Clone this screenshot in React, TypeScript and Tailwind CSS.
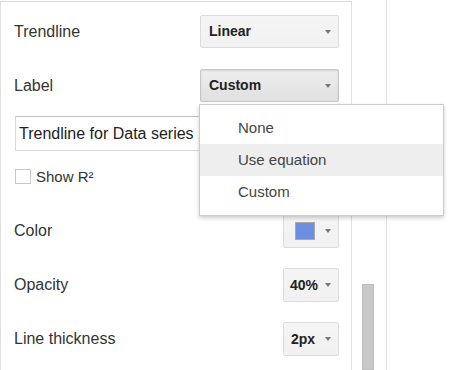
import React from "react";

function Arrow() {
  return <span className="h-0 w-0 border-x-[3px] border-t-[4px] border-x-transparent border-t-[#777]" />;
}

function Select({ value, width, pressed }: { value: string; width: string; pressed?: boolean }) {
  return (
    <div
      className={`flex h-full items-center justify-between rounded-[2px] border pr-[7px] text-[14px] font-bold text-[#222] ${width} ${
        pressed
          ? "border-[#c6c6c6] bg-gradient-to-b from-[#eeeeee] to-[#e0e0e0] shadow-[inset_0_1px_2px_rgba(0,0,0,0.1)]"
          : "border-[#dcdcdc] bg-gradient-to-b from-[#f5f5f5] to-[#f1f1f1]"
      }`}
    >
      <span>{value}</span>
      <Arrow />
    </div>
  );
}

function Row({ label, children, className }: { label: string; children: React.ReactNode; className: string }) {
  return (
    <div className={`flex items-center justify-between pl-[13px] pr-[12px] ${className}`}>
      <span className="text-[16px] text-[#333]">{label}</span>
      {children}
    </div>
  );
}

export default function App() {
  return (
    <div className="relative flex h-[370px] w-[450px] overflow-hidden bg-white font-['Liberation_Sans',Arial,sans-serif]">
      <div className="mt-px w-[352px] shrink-0 border-x border-t border-[#e0e0e0]">
        <Row label="Trendline" className="mt-[13px] h-[33px]">
          <Select value="Linear" width="w-[139px] pl-[8px]" />
        </Row>
        <Row label="Label" className="mt-[21px] h-[33px]">
          <Select value="Custom" width="w-[139px] pl-[8px]" pressed />
        </Row>
        <div className="mt-[14px] pl-[14px] pr-[12px]">
          <div className="flex h-[35px] items-center border border-[#d9d9d9] border-t-[#c0c0c0] pl-[3px] text-[16px] text-[#222]">
            Trendline for Data series 1
          </div>
        </div>
        <div className="mt-[18px] flex items-center gap-[5px] pl-[14px]">
          <span className="h-[15px] w-[16px] border border-[#c6c6c6] bg-white" />
          <span className="text-[15px] leading-[15px] text-[#333]">Show R²</span>
        </div>
        <Row label="Color" className="mt-[30px] h-[34px]">
          <div className="flex h-full w-[56px] items-center justify-between rounded-[2px] border border-[#dcdcdc] bg-gradient-to-b from-[#f5f5f5] to-[#f1f1f1] pl-[11px] pr-[7px]">
            <span className="h-[18px] w-[20px] border border-[#a9a9a9] bg-[#6c8ede]" />
            <Arrow />
          </div>
        </Row>
        <Row label="Opacity" className="mt-[20px] h-[34px]">
          <Select value="40%" width="w-[56px] pl-[6px]" />
        </Row>
        <Row label="Line thickness" className="mt-[20px] h-[34px]">
          <Select value="2px" width="w-[56px] pl-[7px]" />
        </Row>
      </div>
      <div className="w-[35px] shrink-0 border-r border-[#e0e0e0] pl-[10px] pt-[284px]">
        <div className="h-full w-[12px] border border-[#bdbdbd] bg-[#c8c8c8]" />
      </div>

      <div className="absolute left-[199px] top-[104px] w-[245px] border border-[rgba(0,0,0,0.2)] bg-white py-[7px] text-[15px] text-[#444] shadow-[0_2px_4px_rgba(0,0,0,0.2)]">
        <div className="flex h-[32px] items-center pl-[38px]">None</div>
        <div className="flex h-[32px] items-center bg-[#eeeeee] pl-[38px]">Use equation</div>
        <div className="flex h-[32px] items-center pl-[38px]">Custom</div>
      </div>
    </div>
  );
}
